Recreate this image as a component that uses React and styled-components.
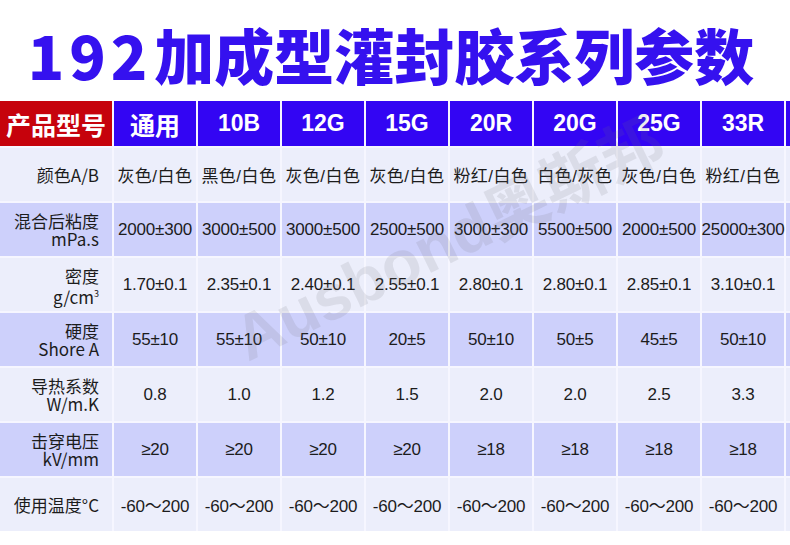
import React from 'react'
import styled, { createGlobalStyle } from 'styled-components'

const GlobalStyle = createGlobalStyle`
  html, body {
    margin: 0;
    padding: 0;
    background: #fff;
  }
  body {
    font-family: 'Liberation Sans', 'Noto Sans CJK SC', sans-serif;
    color: #1a1a1a;
  }
`

const Page = styled.div`
  position: relative;
  width: 790px;
  height: 545px;
  overflow: hidden;
  background: #fff;
`

const Title = styled.h1`
  margin: 0;
  height: 101px;
  box-sizing: border-box;
  padding-top: 6px;
  padding-right: 8px;
  display: flex;
  align-items: center;
  justify-content: center;
  font-family: 'Noto Sans CJK SC', sans-serif;
  font-weight: 900;
  font-size: 60px;
  line-height: 1;
  color: #3511ef;
  white-space: nowrap;
`

const TitleNum = styled.span`
  letter-spacing: 5px;
  margin-right: 2px;
`

const Grid = styled.div`
  display: grid;
  grid-template-columns: 112px repeat(8, 82px) 60px;
  grid-template-rows: 45px repeat(7, 53px);
  gap: 2px;
  width: 850px;
  background: #f6f6ff;
`

const HeadCell = styled.div`
  display: flex;
  align-items: center;
  justify-content: center;
  background: ${(p) => (p.$red ? '#c6020c' : '#3305f3')};
  color: #fff;
  font-weight: 700;
  font-size: ${(p) => (p.$cjk ? '25px' : '23px')};
  font-family: ${(p) =>
    p.$cjk ? "'Noto Sans CJK SC', sans-serif" : "'Liberation Sans', sans-serif"};
  white-space: nowrap;
`

const Label = styled.div`
  display: flex;
  flex-direction: column;
  align-items: flex-end;
  justify-content: center;
  padding-right: 13px;
  background: ${(p) => (p.$dark ? '#cdd0fb' : '#eceefb')};
  font-family: 'Noto Sans CJK SC', sans-serif;
  font-size: 17px;
  color: #1c1c1c;
  white-space: nowrap;
`

const LabelLine = styled.span`
  display: block;
  line-height: 20px;
  height: 20px;
  margin: -1px 0;
`

const Cell = styled.div`
  display: flex;
  align-items: center;
  justify-content: center;
  background: ${(p) => (p.$dark ? '#cdd0fb' : '#eceefb')};
  font-family: 'Liberation Sans', 'Noto Sans CJK SC', sans-serif;
  font-size: 17px;
  color: #1c1c1c;
  white-space: nowrap;
  letter-spacing: ${(p) => (p.$cjk ? '0.5px' : '-0.2px')};
`

const Watermark = styled.div`
  position: absolute;
  left: 212px;
  top: 188px;
  transform: rotate(-26deg);
  transform-origin: center;
  font-family: 'Liberation Sans', 'Noto Sans CJK SC', sans-serif;
  font-weight: 700;
  font-size: 64px;
  color: rgba(110, 110, 120, 0.14);
  white-space: nowrap;
  pointer-events: none;
`

const models = ['通用', '10B', '12G', '15G', '20R', '20G', '25G', '33R']

const rows = [
  {
    label: ['颜色A/B'],
    cjk: true,
    values: ['灰色/白色', '黑色/白色', '灰色/白色', '灰色/白色', '粉红/白色', '白色/灰色', '灰色/白色', '粉红/白色'],
  },
  {
    label: ['混合后粘度', 'mPa.s'],
    values: ['2000±300', '3000±500', '3000±500', '2500±500', '3000±300', '5500±500', '2000±500', '25000±300'],
  },
  {
    label: ['密度', <>g/cm<sup style={{ fontSize: '9px', verticalAlign: '7px' }}>3</sup></>],
    values: ['1.70±0.1', '2.35±0.1', '2.40±0.1', '2.55±0.1', '2.80±0.1', '2.80±0.1', '2.85±0.1', '3.10±0.1'],
  },
  {
    label: ['硬度', 'Shore A'],
    values: ['55±10', '55±10', '50±10', '20±5', '50±10', '50±5', '45±5', '50±10'],
  },
  {
    label: ['导热系数', 'W/m.K'],
    values: ['0.8', '1.0', '1.2', '1.5', '2.0', '2.0', '2.5', '3.3'],
  },
  {
    label: ['击穿电压', 'kV/mm'],
    values: ['≥20', '≥20', '≥20', '≥20', '≥18', '≥18', '≥18', '≥18'],
  },
  {
    label: ['使用温度°C'],
    values: ['-60～200', '-60～200', '-60～200', '-60～200', '-60～200', '-60～200', '-60～200', '-60～200'],
  },
]

export default function App() {
  return (
    <Page>
      <GlobalStyle />
      <Title>
        <TitleNum>192</TitleNum>加成型灌封胶系列参数
      </Title>
      <Grid>
        <HeadCell $red $cjk>产品型号</HeadCell>
        {models.map((m) => (
          <HeadCell key={m} $cjk={m === '通用'}>
            {m}
          </HeadCell>
        ))}
        <HeadCell />
        {rows.map((row, i) => {
          const dark = i % 2 === 1
          return (
            <React.Fragment key={i}>
              <Label $dark={dark}>
                {row.label.map((l, j) => (
                  <LabelLine key={j}>{l}</LabelLine>
                ))}
              </Label>
              {row.values.map((v, j) => (
                <Cell key={j} $dark={dark} $cjk={row.cjk}>
                  {v}
                </Cell>
              ))}
              <Cell $dark={dark} />
            </React.Fragment>
          )
        })}
      </Grid>
      <Watermark>Ausbond奥斯邦</Watermark>
    </Page>
  )
}
